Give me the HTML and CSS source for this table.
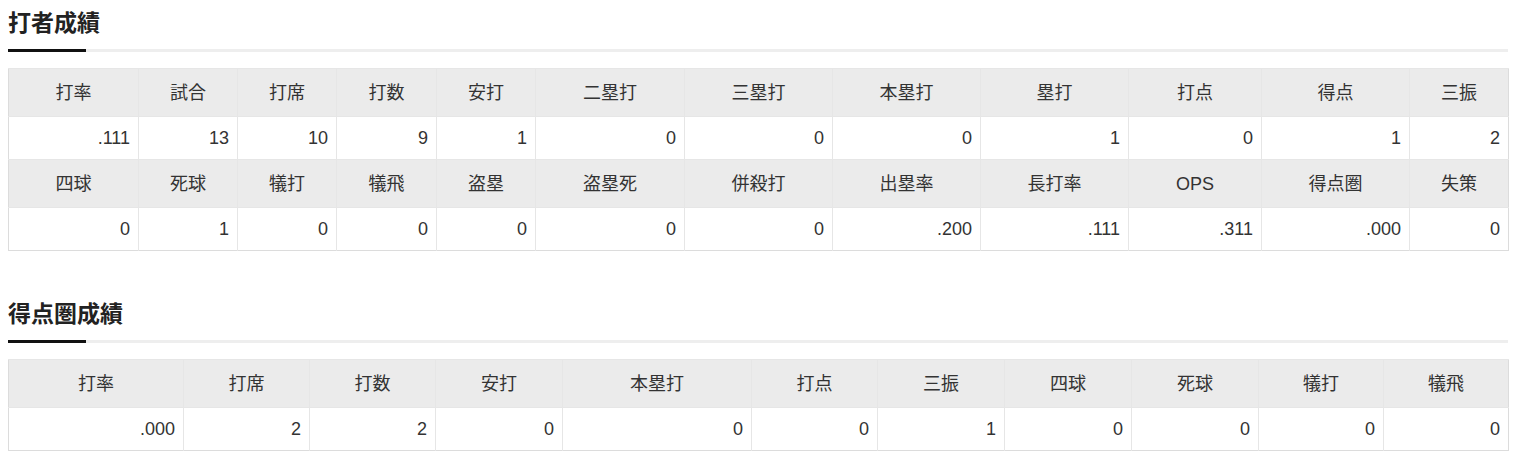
FILE: index.html
```html
<!DOCTYPE html>
<html lang="ja">
<head>
<meta charset="utf-8">
<link rel="stylesheet" href="styles.css">
</head>
<body>
<section class="block">
  <h2 class="title">打者成績</h2>
  <table class="stats">
    <colgroup>
      <col class="w130"><col class="w99"><col class="w99"><col class="w100"><col class="w99"><col class="w149"><col class="w148"><col class="w148"><col class="w148"><col class="w133"><col class="w148"><col class="w99">
    </colgroup>
    <tr class="head"><th>打率</th><th>試合</th><th>打席</th><th>打数</th><th>安打</th><th>二塁打</th><th>三塁打</th><th>本塁打</th><th>塁打</th><th>打点</th><th>得点</th><th>三振</th></tr>
    <tr class="data"><td>.111</td><td>13</td><td>10</td><td>9</td><td>1</td><td>0</td><td>0</td><td>0</td><td>1</td><td>0</td><td>1</td><td>2</td></tr>
    <tr class="head"><th>四球</th><th>死球</th><th>犠打</th><th>犠飛</th><th>盗塁</th><th>盗塁死</th><th>併殺打</th><th>出塁率</th><th>長打率</th><th>OPS</th><th>得点圏</th><th>失策</th></tr>
    <tr class="data"><td>0</td><td>1</td><td>0</td><td>0</td><td>0</td><td>0</td><td>0</td><td>.200</td><td>.111</td><td>.311</td><td>.000</td><td>0</td></tr>
  </table>
</section>
<section class="block second">
  <h2 class="title">得点圏成績</h2>
  <table class="stats">
    <colgroup>
      <col class="w175"><col class="w126"><col class="w126"><col class="w127"><col class="w189"><col class="w126"><col class="w127"><col class="w127"><col class="w127"><col class="w125"><col class="w125">
    </colgroup>
    <tr class="head"><th>打率</th><th>打席</th><th>打数</th><th>安打</th><th>本塁打</th><th>打点</th><th>三振</th><th>四球</th><th>死球</th><th>犠打</th><th>犠飛</th></tr>
    <tr class="data"><td>.000</td><td>2</td><td>2</td><td>0</td><td>0</td><td>0</td><td>1</td><td>0</td><td>0</td><td>0</td><td>0</td></tr>
  </table>
</section>
</body>
</html>
```
FILE: styles.css
```css
html, body { margin: 0; padding: 0; background: #fff; }
body {
  padding: 8px 22px 0 8px;
  font-family: "Liberation Sans", "Noto Sans CJK JP", sans-serif;
  color: #333;
  font-size: 16px;
}
.block.second { margin-top: 48px; }
.title {
  position: relative;
  margin: 0;
  font-size: 23px;
  line-height: 30px;
  font-weight: bold;
  color: #222;
  padding-bottom: 11px;
  border-bottom: 3px solid #eeeeee;
}
.title::after {
  content: "";
  position: absolute;
  left: 0;
  bottom: -3px;
  width: 78px;
  height: 3px;
  background: #111;
}
.stats {
  margin-top: 16px;
  width: 1500px;
  table-layout: fixed;
  border-collapse: collapse;
  border: 1px solid #dcdcdc;
}
.stats th, .stats td {
  border-left: 1px solid #e6e6e6;
  padding: 0 8px;
  line-height: 20px;
  vertical-align: middle;
}
.stats th:first-child, .stats td:first-child { border-left: none; }
.head th {
  background: #ebebeb;
  font-weight: normal;
  text-align: center;
  height: 47px;
  font-size: 18px;
}
.head th, .data td { border-top: 1px solid #e6e6e6; }
.data td {
  text-align: right;
  height: 42px;
  font-size: 18px;
  background: #fff;
}
.w99 { width: 99px; }
.w100 { width: 100px; }
.w125 { width: 125px; }
.w126 { width: 126px; }
.w127 { width: 127px; }
.w130 { width: 130px; }
.w133 { width: 133px; }
.w148 { width: 148px; }
.w149 { width: 149px; }
.w175 { width: 175px; }
.w189 { width: 189px; }
```
